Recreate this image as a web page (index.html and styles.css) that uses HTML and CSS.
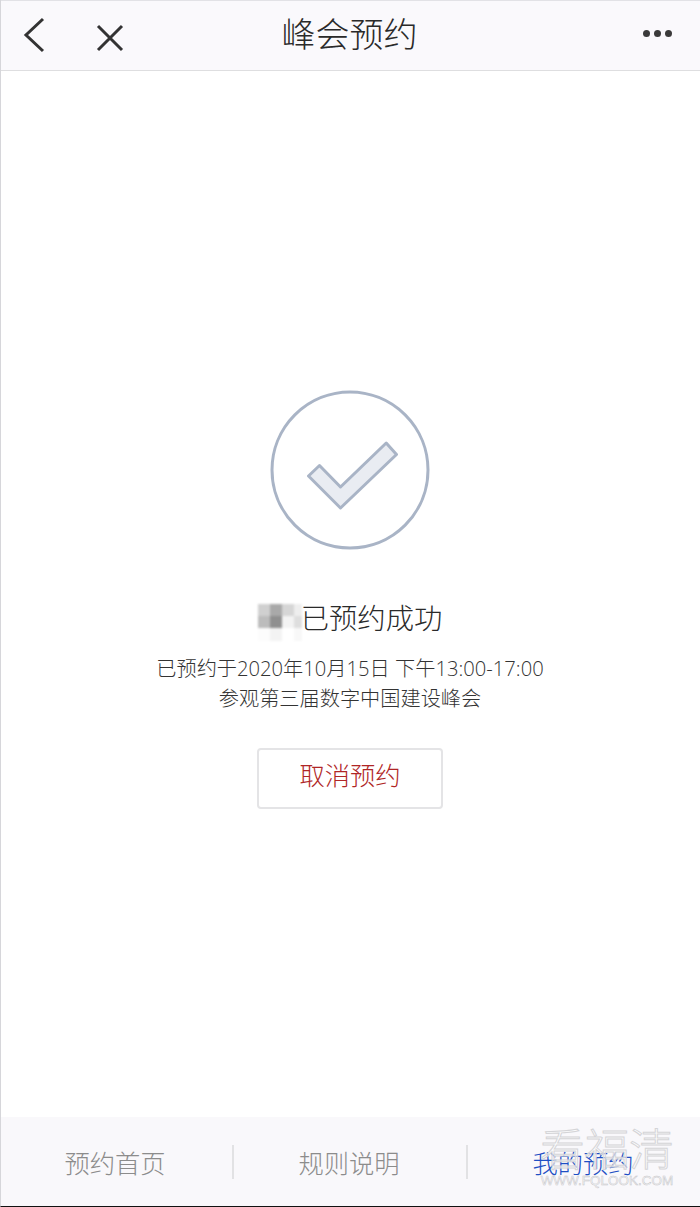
FILE: index.html
```html
<!DOCTYPE html>
<html lang="zh-CN">
<head>
    <meta charset="UTF-8">
    <meta name="viewport" content="width=device-width, initial-scale=1.0">
    <title>峰会预约</title>
    <link rel="stylesheet" href="styles.css">
</head>
<body>
    <div class="app">
        <header class="topbar">
            <div class="topbar-left">
                <svg class="icon-back" width="24" height="36" viewBox="0 0 24 36">
                    <path d="M21 2 L4 18 L21 34" />
                </svg>
                <svg class="icon-close" width="28" height="28" viewBox="0 0 28 28">
                    <path d="M2 2 L26 26 M26 2 L2 26" />
                </svg>
            </div>
            <h1 class="topbar-title">峰会预约</h1>
            <div class="topbar-more">
                <span class="dot"></span><span class="dot"></span><span class="dot"></span>
            </div>
        </header>

        <main class="result">
            <svg class="icon-success" width="160" height="160" viewBox="0 0 160 160">
                <circle class="ring" cx="80" cy="80" r="78" />
                <path class="tick" d="M70.5 118 L38.5 86 L49.5 75.5 L70.5 97 L116.2 53 L126.5 64.5 Z" />
            </svg>

            <div class="result-title">
                <div class="mosaic">
                    <i class="m1"></i><i class="m2"></i><i class="m3"></i><i class="m4"></i>
                    <i class="m5"></i><i class="m6"></i><i class="m7"></i><i class="m8"></i>
                    <i class="m9"></i><i class="m10"></i><i class="m11"></i><i class="m12"></i>
                </div>
                <span class="result-name">已预约成功</span>
            </div>

            <p class="result-info">已预约于2020年10月15日 下午13:00-17:00<br>参观第三届数字中国建设峰会</p>

            <button class="cancel-btn">取消预约</button>
        </main>

        <nav class="tabbar">
            <a class="tab">预约首页</a>
            <a class="tab">规则说明</a>
            <a class="tab active">我的预约</a>
        </nav>

        <div class="watermark">
            <div class="watermark-cn">看福清</div>
            <div class="watermark-en">WWW.FQLOOK.COM</div>
        </div>
    </div>
</body>
</html>
```

FILE: styles.css
```css
* {
    box-sizing: border-box;
}
body {
    margin: 0;
    background: #fff;
    font-family: "Noto Sans CJK SC", "Liberation Sans", sans-serif;
    font-weight: 300;
    color: #333;
}
.app {
    position: relative;
    height: 1207px;
    display: flex;
    flex-direction: column;
    border-left: 1px solid #d6d6da;
    border-bottom: 1px solid #111;
    overflow: hidden;
}

/* top bar */
.topbar {
    position: relative;
    height: 71px;
    flex-shrink: 0;
    display: flex;
    align-items: center;
    justify-content: space-between;
    background: #faf9fc;
    border-top: 1px solid #e2e2e6;
    border-bottom: 1px solid #dedee0;
    padding: 0 28px 0 21px;
}
.topbar-left {
    display: flex;
    align-items: center;
    gap: 50px;
}
.topbar-left svg {
    fill: none;
    stroke: #333;
    stroke-width: 3;
}
.icon-back {
    margin-top: -2px;
}
.icon-close {
    margin-top: 4px;
}
.topbar-title {
    position: absolute;
    left: -2px;
    right: 0;
    top: -1px;
    margin: 0;
    text-align: center;
    font-size: 34px;
    font-weight: 300;
    line-height: 66px;
    color: #2a2a2a;
}
.topbar-more {
    display: flex;
    gap: 4px;
    margin-top: -4px;
}
.dot {
    width: 7px;
    height: 7px;
    border-radius: 50%;
    background: #3a3a3a;
}

/* success block */
.result {
    flex: 1;
    display: flex;
    flex-direction: column;
    align-items: center;
    margin-left: -1px;
    padding-top: 319px;
}
.icon-success .ring {
    fill: none;
    stroke: #a9b4c6;
    stroke-width: 3;
}
.icon-success .tick {
    fill: #e9ecf2;
    stroke: #a9b4c6;
    stroke-width: 3;
    stroke-linejoin: round;
}
.result-title {
    display: flex;
    align-items: center;
    height: 38px;
    margin-top: 52px;
    font-size: 28.3px;
    color: #2a2a2a;
}
.result-name {
    padding-bottom: 10px;
}
.mosaic {
    display: grid;
    grid-template-columns: repeat(3, 12px) 8px;
    grid-template-rows: 12px 12px 13px;
    width: 43px;
    margin-top: 2px;
    filter: blur(1px);
}
.m1 { background: #d0d0d0; }
.m2 { background: #a9a9a9; }
.m3 { background: #d6d6d6; }
.m4 { background: #eeeeee; }
.m5 { background: #bcbcbc; }
.m6 { background: #8f8f8f; }
.m7 { background: #f3f3f3; }
.m8 { background: #dedede; }
.m9 { background: #fcfcfc; }
.m10 { background: #f3f3f3; }
.m11 { background: #ffffff; }
.m12 { background: #f8f8f8; }
.result-info {
    margin: 13px 0 0;
    text-align: center;
    font-family: "Open Sans", "Noto Sans CJK SC", sans-serif;
    font-size: 20.2px;
    line-height: 30px;
    color: #333;
}
.cancel-btn {
    width: 186px;
    height: 61px;
    margin-top: 35px;
    padding: 0 0 9px;
    background: #fff;
    border: 2px solid #e4e4e6;
    border-radius: 4px;
    font-family: inherit;
    font-weight: 300;
    font-size: 25.3px;
    color: #b02626;
    cursor: pointer;
}

/* bottom tabs */
.tabbar {
    height: 89px;
    flex-shrink: 0;
    display: flex;
    align-items: center;
    margin-left: -1px;
    background: #f9f8fb;
}
.tab {
    flex: 1;
    height: 34px;
    display: flex;
    align-items: center;
    justify-content: center;
    padding-right: 2px;
    font-size: 25.3px;
    color: #8c8c8c;
    border-right: 2px solid #e2e2e4;
}
.tab:last-child {
    border-right: none;
}
.tab.active {
    color: #1f4fc4;
}

.watermark {
    position: absolute;
    right: 26px;
    bottom: 18px;
    width: 134px;
    text-align: center;
    white-space: nowrap;
    pointer-events: none;
}
.watermark-cn {
    font-size: 44.5px;
    line-height: 48px;
    margin-bottom: 3px;
    color: rgba(255, 255, 255, 0.6);
    -webkit-text-stroke: 1px #d4d4d7;
}
.watermark-en {
    font-family: "Liberation Sans", sans-serif;
    font-size: 13.5px;
    line-height: 14px;
    color: rgba(255, 255, 255, 0.6);
    -webkit-text-stroke: 0.5px #c4c4c7;
}
```
